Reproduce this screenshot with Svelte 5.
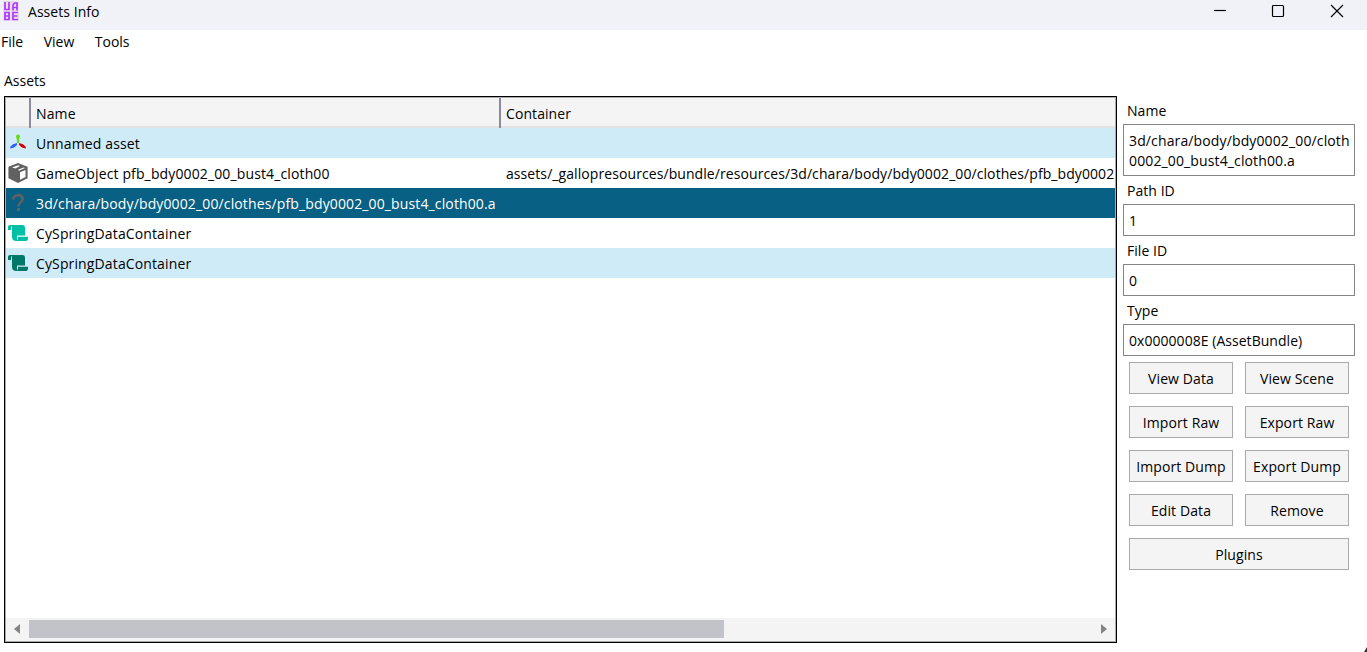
<script lang="ts">
  interface Asset {
    icon: 'axes' | 'cube' | 'unknown' | 'script';
    color?: string;
    name: string;
    container?: string;
    tinted?: boolean;
  }

  const menus = ['File', 'View', 'Tools'];

  const assets: Asset[] = [
    { icon: 'axes', name: 'Unnamed asset', tinted: true },
    {
      icon: 'cube',
      name: 'GameObject pfb_bdy0002_00_bust4_cloth00',
      container: 'assets/_gallopresources/bundle/resources/3d/chara/body/bdy0002_00/clothes/pfb_bdy0002'
    },
    { icon: 'unknown', name: '3d/chara/body/bdy0002_00/clothes/pfb_bdy0002_00_bust4_cloth00.a' },
    { icon: 'script', color: '#00bfa5', name: 'CySpringDataContainer' },
    { icon: 'script', color: '#00796b', name: 'CySpringDataContainer', tinted: true }
  ];

  let selected = $state(2);

  const actions = [
    'View Data', 'View Scene',
    'Import Raw', 'Export Raw',
    'Import Dump', 'Export Dump',
    'Edit Data', 'Remove',
    'Plugins'
  ];
</script>

<div class="window">
  <header class="titlebar">
    <svg class="logo" width="16" height="20" viewBox="0 0 16 20">
      <rect width="16" height="20" fill="#dcdce0" />
      <g fill="none" stroke="#f4e6ff" stroke-width="3">
        <path d="M2 1v7.500h4V1M10 9.500V4l1.500-2H14v7.500M10 6.500h4" />
        <path d="M2 11v7.500h4v-7H2M2 15h4M15 11.500h-5v7h5M10 15h4.500" />
      </g>
      <g fill="none" stroke="#ac36fa" stroke-width="1.700">
        <path d="M2 1v7.500h4V1" />
        <path d="M10 9.500V4l1.500-2H14v7.500M10 6.500h4" />
        <path d="M2 11.500v7h4v-7zM2 15h4" />
        <path d="M15 11.500h-5v7h5M10 15h4.500" />
      </g>
    </svg>
    <span class="title">Assets Info</span>
    <div class="controls">
      <svg width="14" height="14" viewBox="0 0 14 14"><path d="M2 6.500h12" /></svg>
      <svg width="14" height="14" viewBox="0 0 14 14"><rect x="1.5" y="1.5" width="11" height="11" rx="1" /></svg>
      <svg width="14" height="14" viewBox="0 0 14 14"><path d="M1 1l12 12M13 1L1 13" /></svg>
    </div>
  </header>

  <nav class="menu">
    {#each menus as menu}
      <span>{menu}</span>
    {/each}
  </nav>

  <main>
    <section class="assets">
      <div class="caption">Assets</div>
      <div class="grid">
        <div class="row head">
          <span class="cell icon"></span>
          <span class="cell name">Name</span>
          <span class="cell container">Container</span>
        </div>
        {#each assets as asset, i}
          <!-- svelte-ignore a11y_click_events_have_key_events a11y_no_static_element_interactions -->
          <div class="row" class:tinted={asset.tinted} class:selected={selected === i} onclick={() => (selected = i)}>
            <span class="cell icon">
              {#if asset.icon === 'axes'}
                <svg width="20" height="20" viewBox="0 0 20 20">
                  <path d="M8 3.500a2 2 0 0 1 4 0L11 7v3H9V7z" fill="#64dd17" />
                  <path d="M9 10v2l-3 2.600-3.500.9L2 14l3-2.700z" fill="#2962ff" />
                  <path d="M11 10v2l3 2.600 3.500.9L18 14l-3-2.700z" fill="#d50000" />
                </svg>
              {:else if asset.icon === 'cube'}
                <svg width="20" height="20" viewBox="0 0 20 20">
                  <path d="M10 0l9.600 3.800v11.400L10 20 .4 15.200V3.800z" fill="#616161" />
                  <path d="M4 4.500L10 2.200l2 .8-4.500 2.600zM10 6.800l5.500-2.300 1.500.6-6 2.700z" fill="#fff" />
                  <path d="M12 9.300l5.500-2.400v7L12 16.700z" fill="#fff" />
                </svg>
              {:else if asset.icon === 'unknown'}
                <svg width="20" height="20" viewBox="0 0 20 20">
                  <path d="M5.300 6.500C5 .8 15 .8 14.700 6c-.2 3-4.200 3.500-4.200 7.500" fill="none" stroke="#616161" stroke-width="2.700" />
                  <rect x="9" y="15" width="3" height="3" fill="#616161" />
                </svg>
              {:else}
                <svg width="20" height="20" viewBox="0 0 20 20" fill={asset.color}>
                  <path d="M0 7V4c0-1.300.8-2 2-2h12.500C16.300 2 17 3.200 17 5v7.500H9v3.300l1 2.200H8.500C5.500 18 4 16.500 4 14V3.500H3V7z" />
                  <path d="M10 13.700h10v1.500c0 2-1 2.800-3 2.800H8.500c1 0 1.500-1 1.500-2z" />
                </svg>
              {/if}
            </span>
            <span class="cell name">{asset.name}</span>
            <span class="cell container">{asset.container ?? ''}</span>
          </div>
        {/each}
        <div class="scrollbar">
          <svg width="6" height="10" viewBox="0 0 6 10"><path d="M6 0v10L0 5z" /></svg>
          <div class="track"><div class="thumb"></div></div>
          <svg width="6" height="10" viewBox="0 0 6 10"><path d="M0 0v10l6-5z" /></svg>
        </div>
      </div>
    </section>

    <aside>
      <div class="label">Name</div>
      <div class="field tall">
        <div class="value">3d/chara/body/bdy0002_00/cloth</div>
        <div class="value">0002_00_bust4_cloth00.a</div>
      </div>
      <div class="label">Path ID</div>
      <div class="field">1</div>
      <div class="label">File ID</div>
      <div class="field">0</div>
      <div class="label">Type</div>
      <div class="field">0x0000008E (AssetBundle)</div>
      <div class="actions">
        {#each actions as action}
          <button class:wide={action === 'Plugins'}>{action}</button>
        {/each}
      </div>
    </aside>
  </main>

  <svg class="grip" width="3" height="5" viewBox="0 0 3 5"><path d="M3 0v5H0z" /></svg>
</div>

<style>
  :global(body) {
    margin: 0;
    background: #fff;
  }

  .window {
    position: relative;
    width: 1367px;
    height: 652px;
    overflow: hidden;
    display: flex;
    flex-direction: column;
    background: #fff;
    color: #000;
    font: 14px/20px 'Open Sans', 'Noto Sans', sans-serif;
    white-space: nowrap;
  }

  .titlebar {
    height: 30px;
    box-sizing: border-box;
    padding: 1px 23px 0 3px;
    display: flex;
    align-items: flex-start;
    background: #f0f2f8;
  }

  .title {
    margin: 1px 0 0 9px;
    letter-spacing: 0.05px;
  }

  .controls {
    margin: 3px 0 0 auto;
    display: flex;
    gap: 45px;
  }

  .controls svg {
    fill: none;
    stroke: #000;
    stroke-width: 1.2;
  }

  .menu {
    height: 24px;
    padding: 2px 1px 0;
    display: flex;
    gap: 20.5px;
  }

  main {
    flex: 1;
    display: flex;
    padding-left: 4px;
  }

  .assets {
    width: 1113px;
  }

  .caption {
    margin-top: 15px;
    height: 25px;
  }

  .grid {
    height: 547px;
    box-sizing: border-box;
    border: 1px solid #000;
    box-shadow: inset 0 0 0 1px #aaa;
    padding: 1px;
    display: flex;
    flex-direction: column;
    overflow: hidden;
  }

  .row {
    height: 30px;
    flex: none;
    display: flex;
    line-height: 31px;
  }

  .head {
    box-sizing: border-box;
    background: #f4f4f4;
    border-bottom: 2px solid #e2e2e2;
  }

  .tinted {
    background: #d0ebf8;
  }

  .selected {
    background: #086084;
    color: #fff;
  }

  .cell {
    box-sizing: border-box;
    flex: none;
    overflow: hidden;
  }

  .icon {
    width: 25px;
    padding: 5px 0 0 2px;
    line-height: 0;
  }

  .name {
    width: 470px;
    padding-left: 5px;
    letter-spacing: 0.13px;
  }

  .container {
    flex: 1;
    min-width: 0;
    padding-left: 5px;
    letter-spacing: 0.08px;
  }

  .head .icon,
  .head .name {
    height: 30px;
    border-right: 2px solid #8b8b9c;
  }

  .scrollbar {
    margin-top: auto;
    height: 23px;
    box-sizing: border-box;
    padding: 0 8px 1px;
    display: flex;
    align-items: center;
    gap: 8px;
    background: #f4f4f4;
  }

  .scrollbar svg {
    fill: #858585;
  }

  .track {
    flex: 1;
  }

  .thumb {
    width: 695px;
    height: 18px;
    margin-left: 0.5px;
    background: #c2c3c9;
  }

  aside {
    width: 232px;
    margin: 44px 0 0 6px;
  }

  .label {
    height: 24px;
    box-sizing: border-box;
    padding: 1px 0 0 4px;
    letter-spacing: 0.05px;
  }

  .field {
    height: 32px;
    margin-bottom: 4px;
    box-sizing: border-box;
    border: 1px solid #858585;
    padding: 6px 5px;
    line-height: 20px;
    letter-spacing: 0.04px;
  }

  .tall {
    height: 52px;
  }

  .value {
    height: 20px;
    overflow: hidden;
    letter-spacing: 0.13px;
  }

  .actions {
    display: grid;
    grid-template-columns: 104px 104px;
    gap: 12px;
    margin: 6px 0 0 6px;
  }

  button {
    height: 32px;
    padding: 2px 0 0;
    border: 1px solid #aaa;
    background: #f4f4f4;
    font: inherit;
    letter-spacing: 0.1px;
    color: inherit;
  }

  .wide {
    grid-column: span 2;
  }

  .grip {
    position: absolute;
    right: 0;
    bottom: 0;
    fill: #333;
  }
</style>
